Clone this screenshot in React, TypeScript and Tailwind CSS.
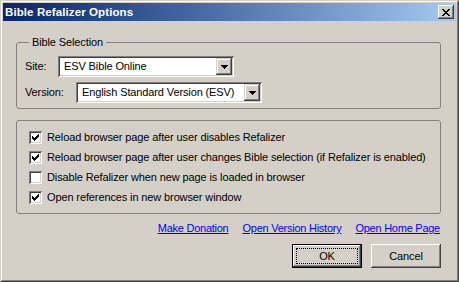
import React from "react";

const raised =
  "shadow-[inset_-1px_-1px_#404040,inset_1px_1px_#ffffff,inset_-2px_-2px_#808080,inset_2px_2px_#d4d0c8]";
const sunken =
  "shadow-[inset_1px_1px_#808080,inset_-1px_-1px_#ffffff,inset_2px_2px_#404040,inset_-2px_-2px_#d4d0c8]";

function Combo({ value, width }: { value: string; width: string }) {
  return (
    <div className={`${width} h-[21px] bg-white ${sunken} flex items-center p-[2px]`}>
      <span className="flex-1 pl-[4px] whitespace-nowrap">{value}</span>
      <div className="w-[16px] h-[17px] bg-[#d4d0c8] shadow-[inset_-1px_-1px_#404040,inset_1px_1px_#d4d0c8,inset_-2px_-2px_#808080,inset_2px_2px_#ffffff] flex items-center justify-center">
        <svg width="7" height="4" viewBox="0 0 7 4" shapeRendering="crispEdges">
          <rect x="0" y="0" width="7" height="1" fill="#000" />
          <rect x="1" y="1" width="5" height="1" fill="#000" />
          <rect x="2" y="2" width="3" height="1" fill="#000" />
          <rect x="3" y="3" width="1" height="1" fill="#000" />
        </svg>
      </div>
    </div>
  );
}

function Check({ checked, label }: { checked: boolean; label: string }) {
  return (
    <div className="h-[20px] flex items-center">
      <div className={`w-[13px] h-[13px] bg-white ${sunken} relative`}>
        {checked && (
          <svg
            className="absolute left-[3px] top-[3px]"
            width="7"
            height="7"
            viewBox="0 0 7 7"
            shapeRendering="crispEdges"
          >
            <rect x="6" y="0" width="1" height="1" fill="#000" />
            <rect x="5" y="1" width="2" height="1" fill="#000" />
            <rect x="0" y="2" width="1" height="1" fill="#000" />
            <rect x="4" y="2" width="3" height="1" fill="#000" />
            <rect x="0" y="3" width="2" height="1" fill="#000" />
            <rect x="3" y="3" width="3" height="1" fill="#000" />
            <rect x="0" y="4" width="5" height="1" fill="#000" />
            <rect x="1" y="5" width="3" height="1" fill="#000" />
            <rect x="2" y="6" width="1" height="1" fill="#000" />
          </svg>
        )}
      </div>
      <span className="ml-[5px] whitespace-nowrap">{label}</span>
    </div>
  );
}

export default function App() {
  return (
    <div className="w-[459px] h-[282px] bg-[#d4d0c8] border border-t-[#d4d0c8] border-l-[#d4d0c8] border-r-[#404040] border-b-[#404040] font-['Liberation_Sans',Arial,sans-serif] text-[11px] leading-[13px] tracking-[-0.12px] text-black">
      <div className="h-full border border-t-white border-l-white border-r-[#808080] border-b-[#808080] p-px flex flex-col">
        {/* Title bar */}
        <div className="h-[18px] shrink-0 bg-gradient-to-r from-[#0a246a] to-[#a6caf0] flex items-center">
          <span className="pl-[2px] text-white font-bold text-[11.5px] tracking-[0.1px]">
            Bible Refalizer Options
          </span>
          <div className={`ml-auto mr-[2px] w-[16px] h-[14px] bg-[#d4d0c8] ${raised} flex items-center justify-center`}>
            <svg width="8" height="7" viewBox="0 0 8 7" shapeRendering="crispEdges">
              <rect x="0" y="0" width="2" height="1" fill="#000" />
              <rect x="6" y="0" width="2" height="1" fill="#000" />
              <rect x="1" y="1" width="2" height="1" fill="#000" />
              <rect x="5" y="1" width="2" height="1" fill="#000" />
              <rect x="2" y="2" width="4" height="1" fill="#000" />
              <rect x="3" y="3" width="2" height="1" fill="#000" />
              <rect x="2" y="4" width="4" height="1" fill="#000" />
              <rect x="1" y="5" width="2" height="1" fill="#000" />
              <rect x="5" y="5" width="2" height="1" fill="#000" />
              <rect x="0" y="6" width="2" height="1" fill="#000" />
              <rect x="6" y="6" width="2" height="1" fill="#000" />
            </svg>
          </div>
        </div>

        {/* Content */}
        <div className="flex flex-col pl-[13px] pr-[15px]">
          <fieldset className="mt-[15px] border border-[#808080] rounded-[3px] pl-[8px] pt-[7px] pb-[5px] flex flex-col gap-[5px]">
            <legend className="ml-[4px] px-[3px] leading-[13px]">Bible Selection</legend>
            <div className="flex items-center h-[21px]">
              <span className="w-[33px]">Site:</span>
              <Combo value="ESV Bible Online" width="w-[176px]" />
            </div>
            <div className="flex items-center h-[21px]">
              <span className="w-[51px]">Version:</span>
              <Combo value="English Standard Version (ESV)" width="w-[186px]" />
            </div>
          </fieldset>

          <div className="mt-[11px] border border-[#808080] rounded-[3px] pl-[12px] pt-[6px] pb-[6px] flex flex-col">
            <Check checked label="Reload browser page after user disables Refalizer" />
            <Check checked label="Reload browser page after user changes Bible selection (if Refalizer is enabled)" />
            <Check checked={false} label="Disable Refalizer when new page is loaded in browser" />
            <Check checked label="Open references in new browser window" />
          </div>

          <div className="mt-[8px] flex justify-end gap-[14px] pr-[1px] text-[#0000ff] tracking-[-0.25px]">
            <span className="underline">Make Donation</span>
            <span className="underline">Open Version History</span>
            <span className="underline">Open Home Page</span>
          </div>

          <div className="mt-[9px] flex justify-end gap-[9px]">
            <div className="w-[70px] h-[24px] bg-[#d4d0c8] border border-black shadow-[inset_-1px_-1px_#404040,inset_1px_1px_#ffffff,inset_-2px_-2px_#808080] p-[3px]">
              <div className="w-full h-full border border-dotted border-black flex items-center justify-center">
                OK
              </div>
            </div>
            <div className={`w-[70px] h-[24px] bg-[#d4d0c8] ${raised} flex items-center justify-center`}>
              Cancel
            </div>
          </div>
        </div>
      </div>
    </div>
  );
}
